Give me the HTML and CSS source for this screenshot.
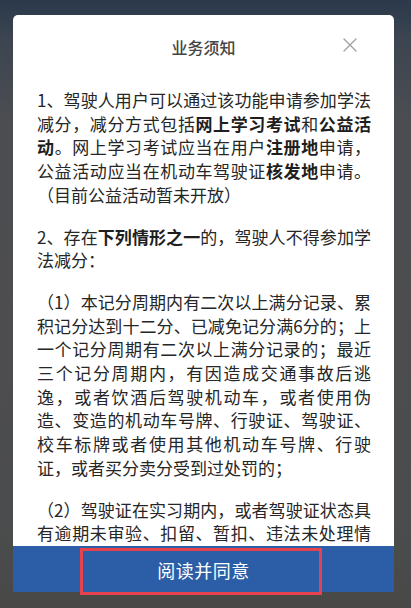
FILE: index.html
```html
<!DOCTYPE html>
<html lang="zh-CN">
<head>
<meta charset="utf-8">
<title>业务须知</title>
<link rel="stylesheet" href="styles.css">
</head>
<body>
<div class="page">
  <div class="card">
    <div class="header">
      <h1 class="title">业务须知</h1>
      <svg class="close" width="14" height="14" viewBox="0 0 14 14" aria-label="关闭">
        <path d="M1 1 L13 13 M13 1 L1 13" stroke="#a2a2a2" stroke-width="1.4" fill="none" stroke-linecap="round"/>
      </svg>
    </div>
    <div class="content">
      <p>1、驾驶人用户可以通过该功能申请参加学法减分，减分方式包括<b>网上学习考试</b>和<b>公益活动</b>。网上学习考试应当在用户<b>注册地</b>申请，公益活动应当在机动车驾驶证<b>核发地</b>申请。（目前公益活动暂未开放）</p>
      <p>2、存在<b>下列情形之一</b>的，驾驶人不得参加学法减分：</p>
      <p>（1）本记分周期内有二次以上满分记录、累积记分达到十二分、已减免记分满6分的；上一个记分周期有二次以上满分记录的；最近三个记分周期内，有因造成交通事故后逃逸，或者饮酒后驾驶机动车，或者使用伪造、变造的机动车号牌、行驶证、驾驶证、校车标牌或者使用其他机动车号牌、行驶证，或者买分卖分受到过处罚的；</p>
      <p>（2）驾驶证在实习期内，或者驾驶证状态具有逾期未审验、扣留、暂扣、违法未处理情形的，不得参加学法减分。</p>
    </div>
    <div class="footer">
      <button class="agree" type="button">阅读并同意</button>
      <div class="highlight"></div>
    </div>
  </div>
</div>
</body>
</html>
```

FILE: styles.css
```css
html, body {
  margin: 0;
  padding: 0;
}

body {
  width: 411px;
  height: 608px;
  overflow: hidden;
  background: linear-gradient(180deg, #2a394b 0px, #3d4550 40px, #4b4d51 120px, #4d4d4f 300px, #4b4c4d 520px, #484947 608px);
  font-family: "Noto Sans CJK SC", "Noto Sans", sans-serif;
}

.page {
  padding: 15px 17px 0 13px;
}

.card {
  height: 577px;
  background: #ffffff;
  border-radius: 5px 5px 0 0;
  display: flex;
  flex-direction: column;
}

.header {
  display: grid;
  grid-template-columns: 1fr auto 1fr;
  align-items: center;
  padding-top: 20px;
  height: 24px;
}

.title {
  grid-column: 2;
  margin: 0;
  font-size: 16px;
  line-height: 24px;
  font-weight: 500;
  color: #444;
}

.close {
  grid-column: 3;
  justify-self: end;
  margin-right: 37px;
  margin-top: -4px;
}

.content {
  flex: 1;
  overflow: hidden;
  padding: 29px 23px 0 24px;
  color: #262626;
  font-size: 17px;
  line-height: 23.7px;
  text-align: justify;
}

.content p {
  margin: 0 0 18px 0;
}

.content b {
  font-weight: 700;
  color: #1e1e1e;
}

.footer {
  position: relative;
  height: 46px;
  background: #2b5ea7;
  display: flex;
  align-items: center;
  justify-content: center;
}

.agree {
  border: 0;
  background: transparent;
  color: #ffffff;
  font-family: "Noto Sans CJK SC", "Noto Sans", sans-serif;
  font-size: 18px;
  letter-spacing: 0.5px;
  padding: 0;
  margin-top: 1px;
}

.highlight {
  position: absolute;
  left: 67px;
  top: 2px;
  width: 242px;
  height: 47px;
  box-sizing: border-box;
  border: 3px solid #e6434c;
}
```
